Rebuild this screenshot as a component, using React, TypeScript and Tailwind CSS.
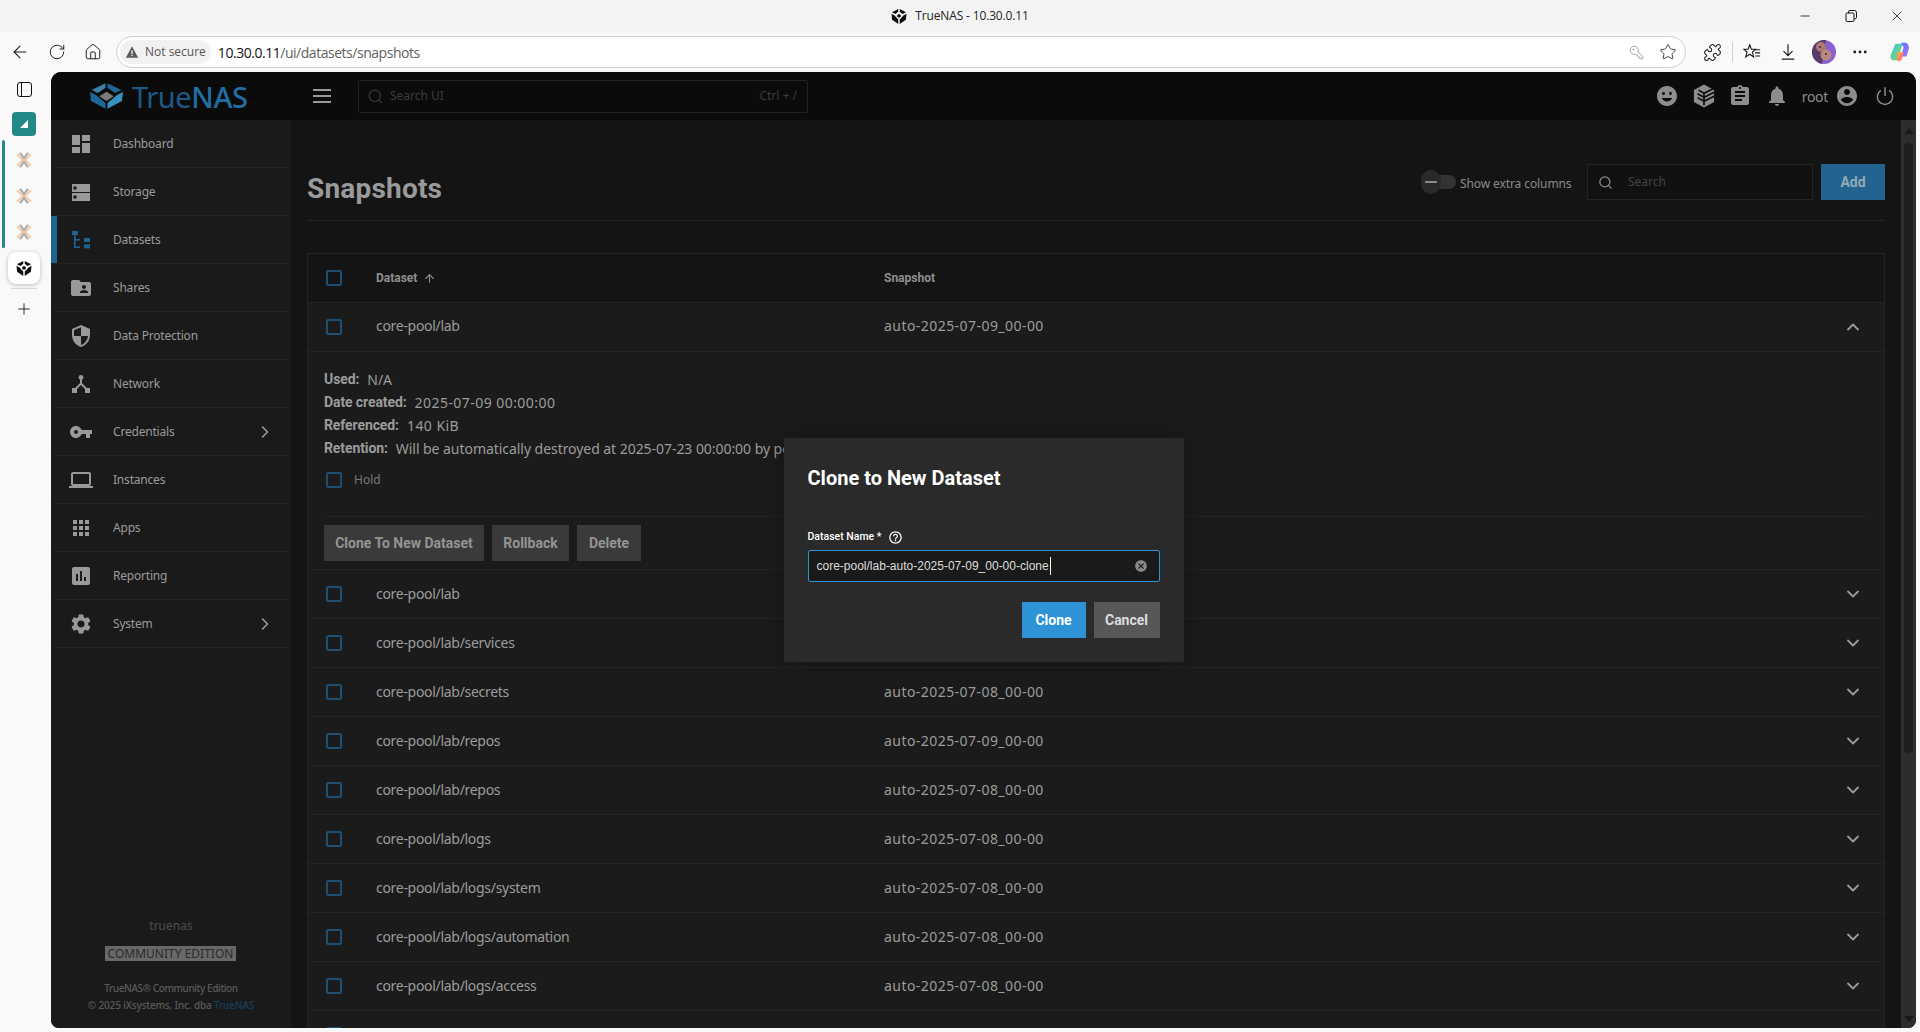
import React from "react";
import { ArrowLeft, RotateCw, House, KeyRound, Star, Puzzle, MoreHorizontal, Search, ChevronRight, ChevronDown, ChevronUp, ArrowUp, Minus, X, Plus } from "lucide-react";

const PLEX = "[font-family:'Noto_Sans','Liberation_Sans',sans-serif]";
const BOLD = "font-['Roboto',sans-serif] font-bold";

function Mi({ d, className, rule }: { d: string; className?: string; rule?: boolean }) {
  return (
    <svg viewBox="0 0 24 24" className={className} fill="currentColor">
      <path d={d} fillRule={rule ? "evenodd" : "nonzero"} clipRule={rule ? "evenodd" : "nonzero"} />
    </svg>
  );
}

const icons = {
  dashboard: "M3 13h8V3H3v10zm0 8h8v-6H3v6zm10 0h8V11h-8v10zm0-18v6h8V3h-8z",
  storage: "M3 4h18v8H3zM6 6.2a1.8 1.8 0 1 0 0 3.6 1.8 1.8 0 0 0 0-3.6zM3 13h18v8H3zM6 15.2a1.8 1.8 0 1 0 0 3.6 1.8 1.8 0 0 0 0-3.6z",
  shares: "M20 6h-8l-2-2H4c-1.1 0-1.99.9-1.99 2L2 18c0 1.1.9 2 2 2h16c1.1 0 2-.9 2-2V8c0-1.1-.9-2-2-2zm-5 3c1.1 0 2 .9 2 2s-.9 2-2 2-2-.9-2-2 .9-2 2-2zm4 8h-8v-1c0-1.33 2.67-2 4-2s4 .67 4 2v1z",
  protection: "M12 1L3 5v6c0 5.55 3.84 10.74 9 12 5.16-1.26 9-6.45 9-12V5l-9-4zm0 10.99h7c-.53 4.12-3.28 7.79-7 8.94V12H5V6.3l7-3.11v8.8z",
  key: "M12.65 10C11.83 7.67 9.61 6 7 6c-3.31 0-6 2.69-6 6s2.69 6 6 6c2.61 0 4.83-1.67 5.65-4H17v4h4v-4h2v-4H12.65zM7 14c-1.1 0-2-.9-2-2s.9-2 2-2 2 .9 2 2-.9 2-2 2z",
  laptop: "M20 18c1.1 0 1.99-.9 1.99-2L22 6c0-1.1-.9-2-2-2H4c-1.1 0-2 .9-2 2v10c0 1.1.9 2 2 2H0v2h24v-2h-4zM4 6h16v10H4V6z",
  apps: "M4 8h4V4H4v4zm6 12h4v-4h-4v4zm-6 0h4v-4H4v4zm0-6h4v-4H4v4zm6 0h4v-4h-4v4zm6-10v4h4V4h-4zm-6 4h4V4h-4v4zm6 6h4v-4h-4v4zm0 6h4v-4h-4v4z",
  report: "M19 3H5c-1.1 0-2 .9-2 2v14c0 1.1.9 2 2 2h14c1.1 0 2-.9 2-2V5c0-1.1-.9-2-2-2zM9 17H7v-7h2v7zm4 0h-2V7h2v10zm4 0h-2v-4h2v4z",
  gear: "M19.14 12.94c.04-.3.06-.61.06-.94 0-.32-.02-.64-.07-.94l2.03-1.58c.18-.14.23-.41.12-.61l-1.92-3.32c-.12-.22-.37-.29-.59-.22l-2.39.96c-.5-.38-1.03-.7-1.62-.94l-.36-2.54c-.04-.24-.24-.41-.48-.41h-3.84c-.24 0-.43.17-.47.41l-.36 2.54c-.59.24-1.13.57-1.62.94l-2.39-.96c-.22-.08-.47 0-.59.22L2.74 8.87c-.12.21-.08.47.12.61l2.03 1.58c-.05.3-.09.63-.09.94s.02.64.07.94l-2.03 1.58c-.18.14-.23.41-.12.61l1.92 3.32c.12.22.37.29.59.22l2.39-.96c.5.38 1.03.7 1.62.94l.36 2.54c.05.24.24.41.48.41h3.84c.24 0 .44-.17.47-.41l.36-2.54c.59-.24 1.13-.56 1.62-.94l2.39.96c.22.08.47 0 .59-.22l1.92-3.32c.12-.22.07-.47-.12-.61l-2.01-1.58zM12 15.6c-1.98 0-3.6-1.62-3.6-3.6s1.62-3.6 3.6-3.6 3.6 1.62 3.6 3.6-1.62 3.6-3.6 3.6z",
  mood: "M11.99 2C6.47 2 2 6.48 2 12s4.47 10 9.99 10C17.52 22 22 17.52 22 12S17.52 2 11.99 2zM15.5 8c.83 0 1.5.67 1.5 1.5s-.67 1.5-1.5 1.5-1.5-.67-1.5-1.5.67-1.5 1.5-1.5zm-7 0c.83 0 1.5.67 1.5 1.5S9.33 11 8.5 11 7 10.33 7 9.5 7.67 8 8.5 8zm3.5 9.5c-2.33 0-4.31-1.46-5.11-3.5h10.22c-.8 2.04-2.78 3.5-5.11 3.5z",
  clip: "M19 3h-4.18C14.4 1.84 13.3 1 12 1c-1.3 0-2.4.84-2.82 2H5c-1.1 0-2 .9-2 2v14c0 1.1.9 2 2 2h14c1.1 0 2-.9 2-2V5c0-1.1-.9-2-2-2zm-7 0c.55 0 1 .45 1 1s-.45 1-1 1-1-.45-1-1 .45-1 1-1zm2 14H7v-2h7v2zm3-4H7v-2h10v2zm0-4H7V7h10v2z",
  bell: "M12 22c1.1 0 2-.9 2-2h-4c0 1.1.89 2 2 2zm6-6v-5c0-3.07-1.64-5.64-4.5-6.32V4c0-.83-.67-1.5-1.5-1.5s-1.5.67-1.5 1.5v.68C7.63 5.36 6 7.92 6 11v5l-2 2v1h16v-1l-2-2z",
  account: "M12 2C6.48 2 2 6.48 2 12s4.48 10 10 10 10-4.48 10-10S17.52 2 12 2zm0 3c1.66 0 3 1.34 3 3s-1.34 3-3 3-3-1.34-3-3 1.34-3 3-3zm0 14.2c-2.5 0-4.71-1.28-6-3.22.03-1.99 4-3.08 6-3.08 1.99 0 5.97 1.09 6 3.08-1.29 1.94-3.5 3.22-6 3.22z",
  help: "M11 18h2v-2h-2v2zm1-16C6.48 2 2 6.48 2 12s4.48 10 10 10 10-4.48 10-10S17.52 2 12 2zm0 18c-4.41 0-8-3.59-8-8s3.59-8 8-8 8 3.59 8 8-3.59 8-8 8zm0-14c-2.21 0-4 1.79-4 4h2c0-1.1.9-2 2-2s2 .9 2 2c0 2-3 1.75-3 5h2c0-2.25 3-2.5 3-5 0-2.21-1.79-4-4-4z",
  cancel: "M12 2C6.47 2 2 6.47 2 12s4.47 10 10 10 10-4.47 10-10S17.53 2 12 2zm5 13.59L15.59 17 12 13.41 8.41 17 7 15.59 10.59 12 7 8.41 8.41 7 12 10.59 15.59 7 17 8.41 13.41 12 17 15.59z",
};

function Logo({ className }: { className?: string }) {
  return (
    <svg viewBox="0 0 100 78" className={className}>
      <polygon points="47,0 47,14 24,30 5,21 " fill="#3a82ad" />
      <polygon points="53,0 95,21 76,30 53,14" fill="#1e6797" />
      <polygon points="0,27 18,36 47,60 47,78 3,54" fill="#1e6797" />
      <polygon points="100,27 82,36 53,60 53,78 97,54" fill="#3a90bd" />
      <polygon points="50,26 72,40 50,54 28,40" fill="#7a7a7a" />
    </svg>
  );
}

function TabLogo({ className }: { className?: string }) {
  return (
    <svg viewBox="0 0 100 100" className={className} fill="#0c0c0c">
      <polygon points="45,0 45,18 26,34 3,22" />
      <polygon points="55,0 97,22 74,34 55,18" />
      <polygon points="0,32 20,44 45,70 45,100 4,72" />
      <polygon points="100,32 80,44 55,70 55,100 96,72" />
      <polygon points="50,32 66,46 50,60 34,46" />
    </svg>
  );
}

function ProxIcon() {
  return (
    <svg viewBox="0 0 20 20" className="w-[16px] h-[16px]" fill="none">
      <path d="M1.5 3 L9 10 L1.5 17 M18.5 3 L11 10 L18.5 17" stroke="#f4c9a6" strokeWidth="2.8" />
      <path d="M5 1 L10 7.5 L15 1 M5 19 L10 12.5 L15 19" stroke="#a5a5a5" strokeWidth="2.4" />
    </svg>
  );
}

function DatasetIcon({ className }: { className?: string }) {
  return (
    <svg viewBox="0 0 18 18" className={className} fill="currentColor">
      <rect x="0" y="0" width="6" height="4" />
      <rect x="2" y="4" width="1.6" height="13" />
      <rect x="2" y="8" width="6" height="1.6" />
      <rect x="2" y="15.4" width="6" height="1.6" />
      <rect x="12" y="7" width="6" height="4" />
      <rect x="12" y="13.4" width="6" height="4" />
    </svg>
  );
}

function NetIcon({ className }: { className?: string }) {
  return (
    <svg viewBox="0 0 18 18" className={className} fill="currentColor">
      <circle cx="9" cy="2.4" r="2.4" />
      <rect x="8" y="3" width="2" height="6" />
      <path d="M8.3 7.8 L9.7 9.2 L3.6 15.4 L2.2 14 Z" />
      <path d="M9.7 7.8 L8.3 9.2 L14.4 15.4 L15.8 14 Z" />
      <rect x="0" y="13" width="5" height="5" />
      <rect x="13" y="13" width="5" height="5" />
    </svg>
  );
}

function CubeIcon({ className }: { className?: string }) {
  return (
    <svg viewBox="0 0 24 26" className={className}>
      <path d="M12 0.5 L23 6.5 V19.5 L12 25.5 L1 19.5 V6.5 Z" fill="currentColor" />
      <path d="M23 4.5 L12 10 L6 6.6 M5 10.5 L12 14.5 L23 8.8 M5 14.8 L12 18.8 L23 13.2 M12 10 V23" stroke="#0b0b0b" strokeWidth="1.8" fill="none" />
    </svg>
  );
}

function PowerIcon({ className }: { className?: string }) {
  return (
    <svg viewBox="0 0 24 24" className={className} fill="none" stroke="currentColor" strokeWidth="1.8">
      <path d="M12 1.5 V12" />
      <path d="M7 5.2 A9.2 9.2 0 1 0 17 5.2" />
    </svg>
  );
}

function Checkbox() {
  return <span className="block w-4 h-4 rounded-[2px] border-2 border-[#1d4f72] shrink-0" />;
}

const nav: { label: string; icon?: string; custom?: "dataset" | "net"; active?: boolean; arrow?: boolean }[] = [
  { label: "Dashboard", icon: icons.dashboard },
  { label: "Storage", icon: icons.storage },
  { label: "Datasets", custom: "dataset", active: true },
  { label: "Shares", icon: icons.shares },
  { label: "Data Protection", icon: icons.protection },
  { label: "Network", custom: "net" },
  { label: "Credentials", icon: icons.key, arrow: true },
  { label: "Instances", icon: icons.laptop },
  { label: "Apps", icon: icons.apps },
  { label: "Reporting", icon: icons.report },
  { label: "System", icon: icons.gear, arrow: true },
];

const rows: [string, string][] = [
  ["core-pool/lab", "auto-2025-07-08_00-00"],
  ["core-pool/lab/services", "auto-2025-07-08_00-00"],
  ["core-pool/lab/secrets", "auto-2025-07-08_00-00"],
  ["core-pool/lab/repos", "auto-2025-07-09_00-00"],
  ["core-pool/lab/repos", "auto-2025-07-08_00-00"],
  ["core-pool/lab/logs", "auto-2025-07-08_00-00"],
  ["core-pool/lab/logs/system", "auto-2025-07-08_00-00"],
  ["core-pool/lab/logs/automation", "auto-2025-07-08_00-00"],
  ["core-pool/lab/logs/access", "auto-2025-07-08_00-00"],
];

function Row({ name, snap, open }: { name: string; snap: string; open?: boolean }) {
  return (
    <div className="flex items-center h-[49px] border-b border-[#242424] bg-[#1b1b1b] shrink-0">
      <div className="w-[68px] pl-[18px] shrink-0"><Checkbox /></div>
      <div className={`w-[508px] shrink-0 text-[14px] text-[#9c9c9c] tracking-[-0.3px] ${open ? "pb-[4px]" : "pb-[2px]"}`}>{name}</div>
      <div className={`flex-1 text-[14px] text-[#9c9c9c] tracking-[0.45px] ${open ? "pb-[4px]" : "pb-[2px]"}`}>{snap}</div>
      {open ? <ChevronUp className="w-[20px] h-[20px] mr-[21px] text-[#9a9a9a]" strokeWidth={2.2} /> : <ChevronDown className="w-[20px] h-[20px] mr-[21px] text-[#9a9a9a]" strokeWidth={2.2} />}
    </div>
  );
}

function Meta({ k, v, digits }: { k: string; v: string; digits?: boolean }) {
  return (
    <div className="h-[23px] flex items-center text-[14px] text-[#9c9c9c] whitespace-nowrap">
      <span className={`${BOLD} mr-[8px] tracking-[-0.1px]`}>{k}</span>
      <span className={digits ? "tracking-[0.45px]" : "tracking-[-0.05px]"}>{v}</span>
    </div>
  );
}

function GreyBtn({ w, children }: { w: string; children: React.ReactNode }) {
  return <button className={`h-[36px] ${w} bg-[#3a3a3a] text-[#949494] text-[14px] ${BOLD}`}>{children}</button>;
}

export default function App() {
  return (
    <div className={`w-screen h-screen overflow-hidden flex flex-col bg-[#f9f9fa] ${PLEX}`}>
      {/* title bar */}
      <div className="h-[32px] shrink-0 bg-[#f3f3f3] flex items-center relative font-['Open_Sans',sans-serif]">
        <div className="flex-1 flex items-center justify-center gap-[8px] text-[12px] text-[#222] tracking-[-0.15px]">
          <TabLogo className="w-[16px] h-[15px]" />
          <span>TrueNAS - 10.30.0.11</span>
        </div>
        <div className="absolute right-0 top-0 h-full flex items-center text-[#111]">
          <div className="w-[46px] flex justify-center"><Minus className="w-[14px] h-[14px]" strokeWidth={1.4} /></div>
          <div className="w-[46px] flex justify-center">
            <svg viewBox="0 0 12 12" className="w-[12px] h-[12px]" fill="none" stroke="#111" strokeWidth="1"><rect x="1" y="3" width="8" height="8.5" rx="1.2" /><path d="M3.5 3 V1.8 Q3.5 .5 5 .5 H9.5 Q11.5 .5 11.5 2.5 V7.5 Q11.5 9 9.5 9" /></svg>
          </div>
          <div className="w-[46px] flex justify-center"><X className="w-[16px] h-[16px]" strokeWidth={1.2} /></div>
        </div>
      </div>
      {/* toolbar */}
      <div className="h-[40px] shrink-0 flex items-center text-[#1c1c1c] font-['Open_Sans',sans-serif]">
        <div className="w-[40px] flex justify-center"><ArrowLeft className="w-[20px] h-[20px]" strokeWidth={1.3} /></div>
        <div className="w-[36px] flex justify-center -ml-[1px]"><RotateCw className="w-[18px] h-[18px]" strokeWidth={1.3} /></div>
        <div className="w-[36px] flex justify-center"><House className="w-[18px] h-[18px]" strokeWidth={1.3} /></div>
        <div className="ml-[5px] w-[1570px] h-[32px] rounded-full border border-[#cfcfcf] bg-white flex items-center pl-[3px] pr-[8px]">
          <div className="h-[24px] rounded-full bg-[#f1f1f1] flex items-center gap-[6px] px-[5px] text-[12px] text-[#555]">
            <svg viewBox="0 0 16 16" className="w-[14px] h-[14px]" fill="#5a5a5a"><path d="M8 1.5 L15 14.5 H1 Z" /><rect x="7.3" y="6" width="1.4" height="4.5" fill="#fff" /><rect x="7.3" y="11.3" width="1.4" height="1.4" fill="#fff" /></svg>
            <span>Not secure</span>
          </div>
          <div className="ml-[7px] text-[14px] text-[#5f5f5f] flex-1 tracking-[-0.47px]"><span className="text-[#111]">10.30.0.11</span>/ui/datasets/snapshots</div>
          <KeyRound className="w-[15px] h-[15px] text-[#777] mr-[15px] -scale-x-100" strokeWidth={1.1} />
          <Star className="w-[18px] h-[18px] text-[#333] mr-0" strokeWidth={1.2} />
        </div>
        <div className="ml-[16px] flex justify-center w-[20px]"><Puzzle className="w-[19px] h-[19px]" strokeWidth={1.3} /></div>
        <div className="w-px h-[20px] bg-[#d0d0d0] ml-[10px]" />
        <div className="ml-[9px] w-[20px] flex justify-center">
          <svg viewBox="0 0 20 20" className="w-[18px] h-[18px]" fill="none" stroke="#1c1c1c" strokeWidth="1.2"><path d="M7.5 2 L9.3 7 H14 L10.5 10 L11.8 15.5 L7.5 12.5 L3 15.5 L4.5 10 L1 7 H5.7 Z" /><path d="M13 7.5 H19 M13.5 11 H19 M13.5 14.5 H19" /></svg>
        </div>
        <div className="ml-[16px] w-[20px] flex justify-center">
          <svg viewBox="0 0 20 20" className="w-[18px] h-[18px]" fill="none" stroke="#1c1c1c" strokeWidth="1.3"><path d="M10 1.5 V13.5 M5 9 L10 14 L15 9 M3 18 H17" /></svg>
        </div>
        <div className="ml-[14px] w-[24px] h-[24px] rounded-full overflow-hidden">
          <svg viewBox="0 0 24 24" className="w-[24px] h-[24px]">
            <rect width="24" height="24" fill="#8a5fd0" />
            <path d="M0 0 H14 L10 24 H0 Z" fill="#5a3a68" />
            <circle cx="9" cy="7" r="5" fill="#a97b72" />
            <circle cx="14" cy="15" r="5.5" fill="#b98a7c" />
            <circle cx="8" cy="7" r="1" fill="#3a2638" />
            <circle cx="14" cy="14" r="1" fill="#3a2638" />
          </svg>
        </div>
        <div className="ml-[14px] w-[20px] flex justify-center"><MoreHorizontal className="w-[18px] h-[18px]" strokeWidth={1.8} /></div>
        <div className="ml-[18px] w-[24px] flex justify-center">
          <svg viewBox="0 0 24 24" className="w-[22px] h-[22px]">
            <defs>
              <linearGradient id="cp1" x1="0" y1="0" x2="1" y2="1"><stop offset="0" stopColor="#3ec6e0" /><stop offset="1" stopColor="#7ed957" /></linearGradient>
              <linearGradient id="cp2" x1="0" y1="0" x2="1" y2="1"><stop offset="0" stopColor="#4a7dff" /><stop offset="1" stopColor="#b86cff" /></linearGradient>
              <linearGradient id="cp3" x1="0" y1="0" x2="1" y2="1"><stop offset="0" stopColor="#ffb347" /><stop offset="1" stopColor="#ff5a7a" /></linearGradient>
            </defs>
            <path d="M7 3 H15 L9 21 H5 C2 21 1 18 2 15 Z" fill="url(#cp1)" />
            <path d="M13 2 H18 C20 2 21 4 22 7 L19 17 H13 L16 7 Z" fill="url(#cp2)" />
            <path d="M9 12 H16 L14 20 C13 22 11 22 9 22 Z" fill="url(#cp3)" />
          </svg>
        </div>
      </div>

      {/* body */}
      <div className="flex-1 min-h-0 flex">
        {/* tab rail */}
        <div className="w-[51px] shrink-0 pr-[3px] flex flex-col items-center relative">
          <div className="mt-[10px] w-[15px] h-[15px] rounded-[3px] border-[1.5px] border-[#111] flex">
            <div className="w-[4px] border-r-[1.5px] border-[#111]" />
          </div>
          <div className="mt-[15px] w-[24px] h-[24px] rounded-[4px] bg-[#22888a] flex items-center justify-center">
            <svg viewBox="0 0 10 10" className="w-[10px] h-[10px]"><path d="M9 1 V9 H1 Z" fill="#fff" /></svg>
          </div>
          <div className="absolute left-[2px] top-[68px] w-[3px] h-[108px] rounded-full bg-[#22888a]" />
          <div className="mt-[16px] flex flex-col items-center gap-[20px]">
            <ProxIcon /><ProxIcon /><ProxIcon />
          </div>
          <div className="mt-[12px] w-[32px] h-[32px] rounded-[8px] bg-white shadow-[0_1px_4px_rgba(0,0,0,0.25)] flex items-center justify-center">
            <TabLogo className="w-[16px] h-[15px]" />
          </div>
          <div className="mt-[4px] w-[26px] h-px bg-[#d8d8d8]" />
          <Plus className="mt-[11px] w-[18px] h-[18px] text-[#1c1c1c]" strokeWidth={1.2} />
        </div>

        {/* app window */}
        <div className="relative flex-1 mr-[4px] mb-[4px] rounded-t-[10px] rounded-b-[8px] overflow-hidden flex flex-col bg-[#141414]">
          {/* header */}
          <div className="h-[48px] shrink-0 bg-[#0b0b0b] flex items-center">
            <div className="w-[240px] shrink-0 flex items-center pl-[39px] gap-[9px]">
              <Logo className="w-[33px] h-[26px]" />
              <span className="text-[#1c5a85] text-[29px] font-normal leading-none tracking-[-0.4px]">True<span className="text-[#216ea3] font-medium">NAS</span></span>
            </div>
            <div className="w-[24px] ml-[19px] flex flex-col gap-[4px] items-center">
              <span className="w-[18px] h-[2px] bg-[#9a9a9a]" /><span className="w-[18px] h-[2px] bg-[#9a9a9a]" /><span className="w-[18px] h-[2px] bg-[#9a9a9a]" />
            </div>
            <div className="ml-[24px] w-[450px] h-[33px] border border-[#222] rounded-[2px] flex items-center px-[8px] text-[12px] text-[#3c3c3c]">
              <Search className="w-[17px] h-[17px] text-[#3c3c3c]" strokeWidth={1.6} />
              <span className="ml-[6px] flex-1">Search UI</span>
              <span className="mr-[2px]">Ctrl + /</span>
            </div>
            <div className="ml-auto flex items-center text-[#8d8d8d] pr-[21px]">
              <Mi d={icons.mood} className="w-[24px] h-[24px]" />
              <CubeIcon className="w-[22px] h-[24px] ml-[14px]" />
              <Mi d={icons.clip} className="w-[24px] h-[24px] ml-[13px]" />
              <Mi d={icons.bell} className="w-[24px] h-[24px] ml-[13px]" />
              <span className="ml-[13px] text-[14px] tracking-[-0.3px]">root</span>
              <Mi d={icons.account} className="w-[24px] h-[24px] ml-[7px]" />
              <PowerIcon className="w-[20px] h-[20px] ml-[16px]" />
            </div>
          </div>
          {/* content */}
          <div className="flex-1 min-h-0 flex">
            {/* sidebar */}
            <div className="w-[240px] shrink-0 bg-[#1a1a1a] flex flex-col text-[12px] text-[#9b9b9b] tracking-[-0.2px]">
              {nav.map((n) => (
                <div key={n.label} className="h-[48px] shrink-0 ml-[2px] border-b border-[#232323] flex items-center relative">
                  {n.active && <span className="absolute left-[-2px] top-0 bottom-0 w-[6px] bg-[#1f6491]" />}
                  <div className={`w-[56px] mr-[4px] flex justify-center shrink-0 ${n.active ? "text-[#1f6491]" : "text-[#999]"}`}>
                    {n.custom === "dataset" ? <DatasetIcon className="w-[18px] h-[18px]" /> : n.custom === "net" ? <NetIcon className="w-[18px] h-[18px]" /> : <Mi d={n.icon!} rule={n.icon === icons.storage} className="w-[24px] h-[24px]" />}
                  </div>
                  <span className="flex-1">{n.label}</span>
                  {n.arrow && <ChevronRight className="w-[20px] h-[20px] mr-[16px]" strokeWidth={2} />}
                </div>
              ))}
              <div className="mt-auto flex flex-col items-center pb-[14px] text-[#5a5a5a] tracking-normal">
                <span className="text-[12px] text-[#4e4e4e] -mt-[1px]">truenas</span>
                <span className="mt-[11px] h-[15px] w-[131px] -ml-[1px] bg-[#686868] text-[#2b2b2b] text-[12px] flex items-center justify-center leading-none">COMMUNITY EDITION</span>
                <span className="mt-[19px] text-[10px] leading-[17px] font-medium tracking-[-0.4px]">TrueNAS® Community Edition</span>
                <span className="text-[10px] leading-[17px] font-medium tracking-[-0.15px]">© 2025 iXsystems, Inc. dba <span className="text-[#173f5c]">TrueNAS</span></span>
              </div>
            </div>

            {/* main */}
            <div className="flex-1 min-w-0 flex flex-col px-[16px] overflow-hidden">
              <div className="h-[101px] shrink-0 border-b border-[#242424] flex items-start pt-[44px]">
                <h1 className={`text-[28px] leading-[36px] text-[#9a9a9a] mt-[7px] tracking-[0.2px] ${BOLD}`}>Snapshots</h1>
                <div className="ml-auto flex items-center">
                  <div className="relative w-[34px] h-[14px] rounded-full bg-[#333] mr-[4px]">
                    <span className="absolute left-[-1px] top-[-5px] w-[20px] h-[24px] rounded-full bg-[#2a2a2a] flex items-center justify-center"><span className="w-[12px] h-[2px] bg-[#8a8a8a]" /></span>
                  </div>
                  <span className="text-[12px] text-[#8a8a8a] mt-[3px] w-[111px] tracking-[-0.1px] whitespace-nowrap">Show extra columns</span>
                  <div className="ml-[16px] w-[226px] h-[36px] border border-[#242424] bg-[#111] flex items-center pl-[10px] text-[12px] text-[#444]">
                    <Search className="w-[15px] h-[15px] text-[#8d8d8d]" strokeWidth={2} />
                    <span className="ml-[15px]">Search</span>
                  </div>
                  <button className={`ml-[8px] w-[64px] h-[36px] bg-[#22648f] text-[#94a9b8] text-[14px] ${BOLD}`}>Add</button>
                </div>
              </div>
              <div className="mt-[32px] border border-[#242424] flex flex-col">
                <div className="h-[49px] flex items-center border-b border-[#242424] shrink-0">
                  <div className="w-[68px] pl-[18px] shrink-0"><Checkbox /></div>
                  <div className={`w-[508px] shrink-0 text-[12px] text-[#8f8f8f] flex items-center gap-[6px] ${BOLD}`}>Dataset <ArrowUp className="w-[13px] h-[13px]" strokeWidth={2} /></div>
                  <div className={`text-[12px] text-[#8f8f8f] ${BOLD}`}>Snapshot</div>
                </div>
                <Row name="core-pool/lab" snap="auto-2025-07-09_00-00" open />
                <div className="h-[218px] shrink-0 bg-[#1b1b1b] border-b border-[#242424] px-[16px] flex flex-col">
                  <div className="pt-[16px]">
                    <Meta k="Used:" v="N/A" />
                    <Meta k="Date created:" v="2025-07-09 00:00:00" digits />
                    <Meta k="Referenced:" v="140 KiB" digits />
                    <Meta k="Retention:" v="Will be automatically destroyed at 2025-07-23 00:00:00 by periodic snapshot task" />
                  </div>
                  <div className="mt-[12px] h-[16px] flex items-center pl-[2px] gap-[12px] text-[12px] text-[#787878]"><Checkbox />Hold</div>
                  <div className="mt-[28px] border-t border-[#242424]" />
                  <div className="mt-[8px] flex gap-[8px]">
                    <GreyBtn w="w-[160px]">Clone To New Dataset</GreyBtn>
                    <GreyBtn w="w-[77px]">Rollback</GreyBtn>
                    <GreyBtn w="w-[64px]">Delete</GreyBtn>
                  </div>
                </div>
                {rows.map((r, i) => <Row key={i} name={r[0]} snap={r[1]} />)}
                <Row name="" snap="" />
              </div>
            </div>

            {/* scrollbar */}
            <div className="w-[15px] shrink-0 bg-[#2d2d2d] flex flex-col items-center">
              <span className="mt-[8px] w-0 h-0 border-l-[5px] border-r-[5px] border-b-[6px] border-l-transparent border-r-transparent border-b-[#1a1a1a]" />
              <span className="mt-[9px] w-[9px] h-[610px] rounded-full bg-[#1e1e1e]" />
              <span className="mt-auto mb-[6px] w-0 h-0 border-l-[5px] border-r-[5px] border-t-[6px] border-l-transparent border-r-transparent border-t-[#1a1a1a]" />
            </div>
          </div>

          {/* dialog */}
          <div className="absolute inset-0 flex items-center justify-center">
            <div className="w-[400px] h-[224px] bg-[#2a2a2a] shadow-[0_0_24px_rgba(0,0,0,0.3)] px-[24px] pt-[24px] flex flex-col">
              <h2 className={`text-[20px] leading-[32px] text-white ${BOLD}`}>Clone to New Dataset</h2>
              <div className="mt-[35px] h-[16px] flex items-center text-[10.5px] font-['Roboto',sans-serif] font-medium text-white">
                Dataset Name *
                <Mi d={icons.help} className="w-[15px] h-[15px] ml-[7px]" />
              </div>
              <div className="mt-[5px] h-[32px] w-[352px] border border-[#2e92d6] rounded-[2px] bg-[#1a1a1a] flex items-center pl-[8px] pr-[11px] text-[12px] text-[#ddd] font-['Liberation_Sans',sans-serif]">
                <span className="border-r border-white pr-px">core-pool/lab-auto-2025-07-09_00-00-clone</span>
                <Mi d={icons.cancel} className="ml-auto w-[14px] h-[14px] text-[#8a8a8a]" />
              </div>
              <div className="mt-[20px] flex justify-end gap-[8px]">
                <button className={`w-[64px] h-[36px] bg-[#2e92d6] text-white text-[14px] ${BOLD}`}>Clone</button>
                <button className={`w-[66px] h-[36px] bg-[#575757] text-[#ddd] text-[14px] ${BOLD}`}>Cancel</button>
              </div>
            </div>
          </div>
        </div>
      </div>
    </div>
  );
}
